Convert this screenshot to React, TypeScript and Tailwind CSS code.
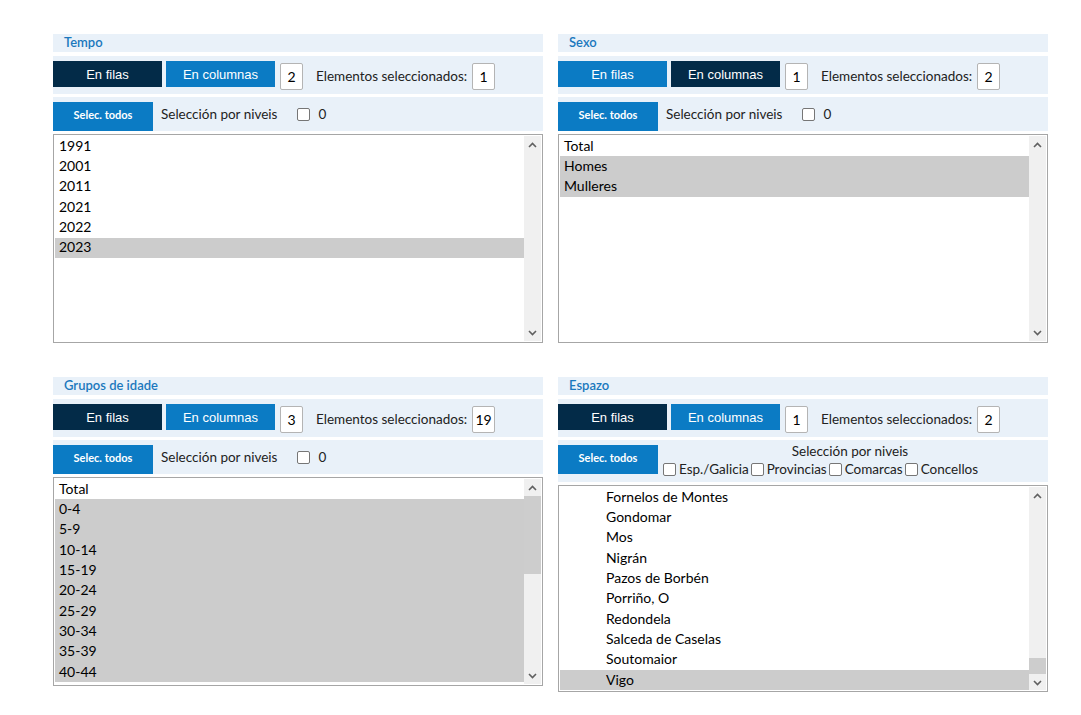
import React from "react";

type Item = { label: string; selected?: boolean };

type PanelProps = {
  title: string;
  filasDark: boolean;
  count: number;
  selected: number;
  items: Item[];
  indent?: boolean;
  thumb?: { top: number; height: number };
  levels?: boolean;
  listHeight: string;
};

const font = { fontFamily: "Lato, 'Noto Sans', sans-serif" };

const Chevron = ({ up }: { up?: boolean }) => (
  <svg width="9" height="6" viewBox="0 0 9 6" className="text-[#606060]">
    <path
      d={up ? "M1 5 L4.5 1.5 L8 5" : "M1 1 L4.5 4.5 L8 1"}
      fill="none"
      stroke="currentColor"
      strokeWidth={1.6}
    />
  </svg>
);

const Box = ({ n }: { n: number }) => (
  <span className="flex items-center justify-center w-[23px] h-[27px] bg-white border border-[#b4b4b4] rounded-[2px] text-[14px] text-black">
    {n}
  </span>
);

const Check = () => (
  <span className="inline-block w-[13px] h-[13px] bg-white border border-[#767676] rounded-[2px] shrink-0" />
);

const Panel = ({
  title,
  filasDark,
  count,
  selected,
  items,
  indent,
  thumb,
  levels,
  listHeight,
}: PanelProps) => {
  return (
    <div className="flex flex-col" style={font}>
      <div className="h-[18px] bg-[#e9f1f9] pl-[11px] flex items-center text-[13px] font-semibold text-[#1b78bd]">
        {title}
      </div>

      <div className="mt-[4px] h-[38px] bg-[#e9f1f9] pt-[5px] flex items-start">
        <button
          className={`w-[109px] h-[26px] pt-[1px] text-[13px] text-white ${
            filasDark ? "bg-[#032b48]" : "bg-[#0b7bc4]"
          }`}
          style={{ fontFamily: "'Liberation Sans', Arial, sans-serif" }}
        >
          En filas
        </button>
        <button
          className={`ml-[4px] w-[109px] h-[26px] pt-[1px] text-[13px] text-white ${
            filasDark ? "bg-[#0b7bc4]" : "bg-[#032b48]"
          }`}
          style={{ fontFamily: "'Liberation Sans', Arial, sans-serif" }}
        >
          En columnas
        </button>
        <span className="ml-[5px] mt-[2px]">
          <Box n={count} />
        </span>
        <span className="ml-[13px] mt-[2px] h-[27px] flex items-center text-[13.5px] text-[#222]">
          Elementos seleccionados:
        </span>
        <span className="ml-[5px] mt-[2px]">
          <Box n={selected} />
        </span>
      </div>

      <div
        className={`mt-[3px] bg-[#e9f1f9] flex items-start ${
          levels ? "h-[42px]" : "h-[34px]"
        }`}
      >
        <button className="mt-[5px] w-[100px] h-[29px] pb-[3px] bg-[#0b7bc4] text-white text-[11px] font-bold shrink-0">
          Selec. todos
        </button>
        {levels ? (
          <div className="flex-1 flex flex-col text-[13.5px] text-[#222]">
            <div className="h-[19px] pt-[1px] text-center pr-[6px]">Selección por niveis</div>
            <div className="flex items-center pl-[5px] h-[20px]">
              <Check />
              <span className="ml-[3px] mr-[2px]">Esp./Galicia</span>
              <Check />
              <span className="ml-[3px] mr-[2px]">Provincias</span>
              <Check />
              <span className="ml-[3px] mr-[2px]">Comarcas</span>
              <Check />
              <span className="ml-[3px]">Concellos</span>
            </div>
          </div>
        ) : (
          <div className="h-full flex items-center text-[13.5px] text-[#222] pt-[1px]">
            <span className="ml-[8px]">Selección por niveis</span>
            <span className="ml-[20px] flex">
              <Check />
            </span>
            <span className="ml-[8px]">0</span>
          </div>
        )}
      </div>

      <div
        className={`mt-[3px] border border-[#a6a6a6] p-[1px] bg-white flex ${listHeight}`}
      >
        <div className="flex-1 overflow-hidden">
          {items.map((it) => (
            <div
              key={it.label}
              className={`h-[20.35px] pb-[2px] flex items-center text-[14px] text-black ${
                indent ? "pl-[46px]" : "pl-[4px]"
              } ${it.selected ? "bg-[#cccccc]" : ""}`}
            >
              {it.label}
            </div>
          ))}
        </div>
        <div className="w-[17px] bg-[#f0f0f0] flex flex-col">
          <div className="h-[17px] flex items-center justify-center shrink-0">
            <Chevron up />
          </div>
          <div className="flex-1 flex flex-col">
            {thumb && (
              <>
                <div style={{ height: thumb.top }} />
                <div className="bg-[#cdcdcd]" style={{ height: thumb.height }} />
              </>
            )}
          </div>
          <div className="h-[17px] flex items-center justify-center shrink-0">
            <Chevron />
          </div>
        </div>
      </div>
    </div>
  );
};

const ages = ["0-4", "5-9", "10-14", "15-19", "20-24", "25-29", "30-34", "35-39", "40-44"];

const concellos = [
  "Fornelos de Montes",
  "Gondomar",
  "Mos",
  "Nigrán",
  "Pazos de Borbén",
  "Porriño, O",
  "Redondela",
  "Salceda de Caselas",
  "Soutomaior",
];

export default function App() {
  return (
    <div className="w-[1081px] h-[715px] bg-white pt-[34px] pl-[53px]">
      <div className="grid grid-cols-[490px_490px] gap-x-[15px] gap-y-[34px] items-start">
        <Panel
          title="Tempo"
          filasDark
          count={2}
          selected={1}
          listHeight="h-[209px]"
          items={[
            { label: "1991" },
            { label: "2001" },
            { label: "2011" },
            { label: "2021" },
            { label: "2022" },
            { label: "2023", selected: true },
          ]}
        />
        <Panel
          title="Sexo"
          filasDark={false}
          count={1}
          selected={2}
          listHeight="h-[209px]"
          items={[
            { label: "Total" },
            { label: "Homes", selected: true },
            { label: "Mulleres", selected: true },
          ]}
        />
        <Panel
          title="Grupos de idade"
          filasDark
          count={3}
          selected={19}
          listHeight="h-[209px]"
          thumb={{ top: 0, height: 78 }}
          items={[
            { label: "Total" },
            ...ages.map((a) => ({ label: a, selected: true })),
          ]}
        />
        <Panel
          title="Espazo"
          filasDark
          count={1}
          selected={2}
          levels
          indent
          listHeight="h-[207px]"
          thumb={{ top: 154, height: 16 }}
          items={[
            ...concellos.map((c) => ({ label: c })),
            { label: "Vigo", selected: true },
          ]}
        />
      </div>
    </div>
  );
}
